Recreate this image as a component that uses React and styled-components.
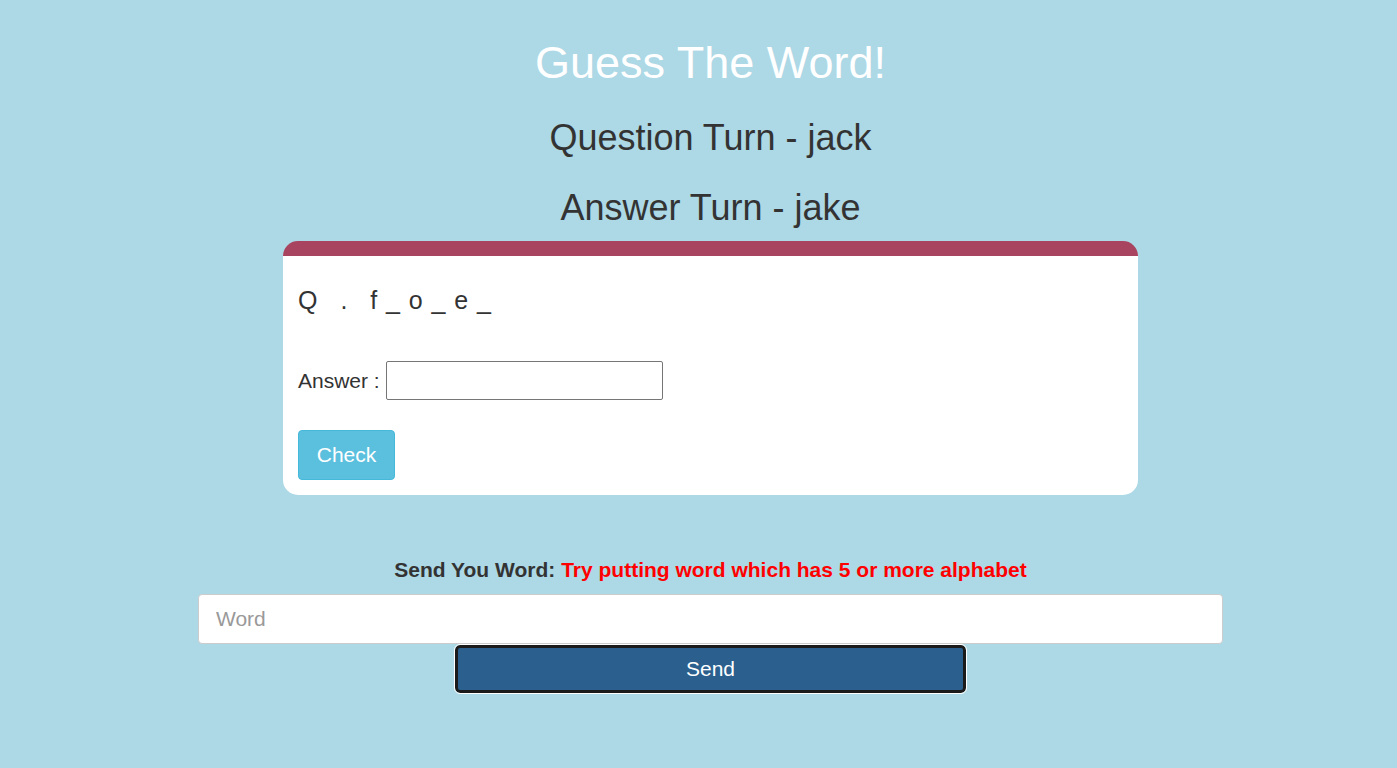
import React from 'react'
import styled, { createGlobalStyle } from 'styled-components'

const GlobalStyle = createGlobalStyle`
  html, body {
    margin: 0;
    padding: 0;
    background: #add8e6;
    font-family: "Liberation Sans", Arial, sans-serif;
    color: #333;
  }
`

const Page = styled.div`
  min-height: 768px;
  padding: 0 0 0 24px;
  box-sizing: border-box;
  display: flex;
  flex-direction: column;
  align-items: center;
`

const Title = styled.h1`
  margin: 34px 0 0;
  font-size: 45px;
  font-weight: 400;
  line-height: 58px;
  color: #fff;
`

const Turn = styled.h2`
  margin: ${p => p.$top}px 0 0;
  font-size: 36px;
  font-weight: 400;
  line-height: 40px;
  color: #333;
`

const Card = styled.div`
  margin-top: 13px;
  width: 855px;
  background: #fff;
  border-top: 15px solid #a8445f;
  border-radius: 15px;
  padding: 27px 15px 15px;
  box-sizing: border-box;
`

const Question = styled.div`
  font-size: 25px;
  line-height: 34px;
  white-space: pre;
  word-spacing: 0.7px;
`

const Blanks = styled.span`
  word-spacing: 1.9px;
`

const AnswerRow = styled.label`
  display: flex;
  align-items: center;
  gap: 6px;
  margin-top: 44px;
  font-size: 21px;
`

const AnswerInput = styled.input`
  width: 277px;
  height: 39px;
  box-sizing: border-box;
  border: 1px solid #767676;
  border-radius: 2px;
  font-size: 18px;
  padding: 0 4px;
`

const CheckButton = styled.button`
  margin-top: 30px;
  width: 97px;
  height: 50px;
  background: #5bc0de;
  border: 1px solid #46b8da;
  border-radius: 4px;
  color: #fff;
  font-family: inherit;
  font-size: 21px;
  cursor: pointer;
`

const SendForm = styled.div`
  margin-top: 61px;
  width: 1025px;
  display: flex;
  flex-direction: column;
  align-items: center;
`

const SendLabel = styled.div`
  font-size: 21px;
  font-weight: 700;
  line-height: 28px;
  color: #333;
`

const Hint = styled.span`
  color: #f00;
`

const WordInput = styled.input`
  margin-top: 10px;
  width: 100%;
  height: 50px;
  box-sizing: border-box;
  border: 1px solid #ccc;
  border-radius: 4px;
  padding: 0 17px;
  font-family: inherit;
  font-size: 21px;
  color: #555;
  background: #fff;
  &::placeholder {
    color: #999;
  }
`

const SendButton = styled.button`
  margin-top: 1px;
  width: 511px;
  height: 48px;
  box-sizing: border-box;
  background: #2a5f8e;
  border: 3px solid #1b1b1b;
  border-radius: 5px;
  outline: 1px solid #fff;
  color: #fff;
  font-family: inherit;
  font-size: 21px;
  cursor: pointer;
`

export default function App() {
  return (
    <>
      <GlobalStyle />
      <Page>
        <Title>Guess The Word!</Title>
        <Turn $top={26}>Question Turn - jack</Turn>
        <Turn $top={30}>Answer Turn - jake</Turn>
        <Card>
          <Question>
            {'Q   .   '}
            <Blanks>{'f _ o _ e _'}</Blanks>
          </Question>
          <AnswerRow>
            Answer :
            <AnswerInput type="text" />
          </AnswerRow>
          <CheckButton>Check</CheckButton>
        </Card>
        <SendForm>
          <SendLabel>
            Send You Word: <Hint>Try putting word which has 5 or more alphabet</Hint>
          </SendLabel>
          <WordInput type="text" placeholder="Word" />
          <SendButton>Send</SendButton>
        </SendForm>
      </Page>
    </>
  )
}
